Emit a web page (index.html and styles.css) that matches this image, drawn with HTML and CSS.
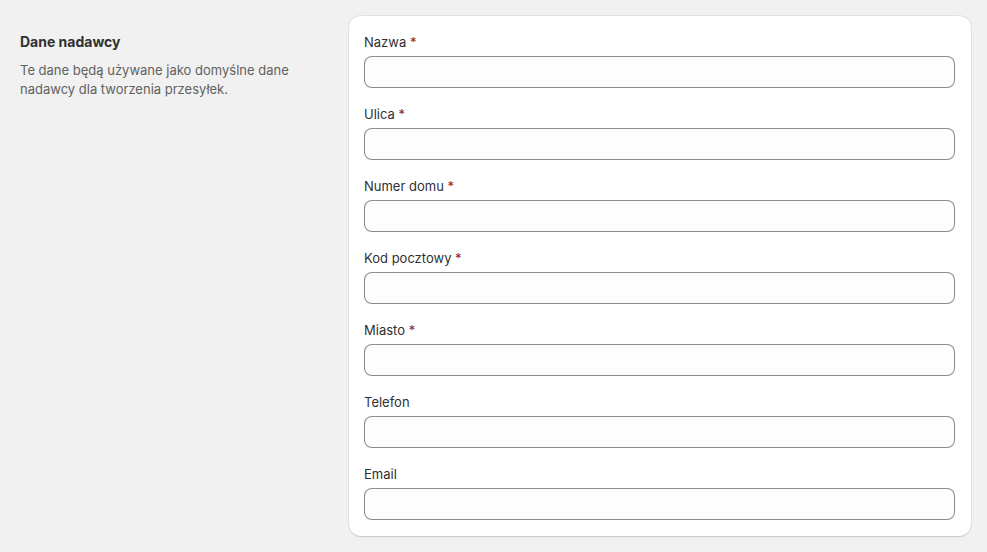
FILE: index.html
```html
<!DOCTYPE html>
<html lang="pl">
<head>
    <meta charset="UTF-8">
    <meta name="viewport" content="width=device-width, initial-scale=1.0">
    <title>Dane nadawcy</title>
    <link rel="stylesheet" href="styles.css">
</head>
<body>

    <main class="layout">

        <!-- Section description -->
        <section class="annotation">
            <h2>Dane nadawcy</h2>
            <p>Te dane będą używane jako domyślne dane nadawcy dla tworzenia przesyłek.</p>
        </section>

        <!-- Sender form -->
        <section class="card">
            <div class="field">
                <label for="name">Nazwa <span class="required">*</span></label>
                <input type="text" id="name" class="text-input">
            </div>
            <div class="field">
                <label for="street">Ulica <span class="required">*</span></label>
                <input type="text" id="street" class="text-input">
            </div>
            <div class="field">
                <label for="house">Numer domu <span class="required">*</span></label>
                <input type="text" id="house" class="text-input">
            </div>
            <div class="field">
                <label for="zip">Kod pocztowy <span class="required">*</span></label>
                <input type="text" id="zip" class="text-input">
            </div>
            <div class="field">
                <label for="city">Miasto <span class="required">*</span></label>
                <input type="text" id="city" class="text-input">
            </div>
            <div class="field">
                <label for="phone">Telefon</label>
                <input type="tel" id="phone" class="text-input">
            </div>
            <div class="field">
                <label for="email">Email</label>
                <input type="email" id="email" class="text-input">
            </div>
        </section>

    </main>

</body>
</html>
```

FILE: styles.css
```css
body {
    margin: 0;
    padding: 0;
    font-family: 'Inter', 'Liberation Sans', sans-serif;
    font-size: 13px;
    line-height: 20px;
    background-color: #f1f1f1;
    color: #303030;
}

.layout {
    display: grid;
    grid-template-columns: 329px 1fr;
    padding: 16px 16px 16px 20px;
    align-items: start;
}

.annotation {
    padding-top: 16px;
    padding-right: 20px;
}

.annotation h2 {
    margin: 0 0 9px 0;
    font-size: 14px;
    font-weight: 650;
    line-height: 20px;
    color: #303030;
}

.annotation p {
    margin: 0;
    color: #616161;
    line-height: 19px;
}

.card {
    display: flex;
    flex-direction: column;
    gap: 16px;
    padding: 16px 16px 16px 15px;
    background-color: #fff;
    border-radius: 12px;
    box-shadow: 0 0 0 1px rgba(0, 0, 0, 0.06), 0 1px 1px rgba(0, 0, 0, 0.12);
}

.field {
    display: flex;
    flex-direction: column;
    gap: 4px;
}

.field label {
    font-size: 13px;
    line-height: 20px;
    color: #303030;
}

.required {
    color: #8e1f0b;
}

.text-input {
    height: 32px;
    margin: 0;
    padding: 0 12px;
    border: 1px solid #8a8a8a;
    border-top-color: #898f94;
    border-radius: 8px;
    background-color: #fdfdfd;
    font-family: inherit;
    font-size: 13px;
    color: #303030;
    box-sizing: border-box;
}
```
